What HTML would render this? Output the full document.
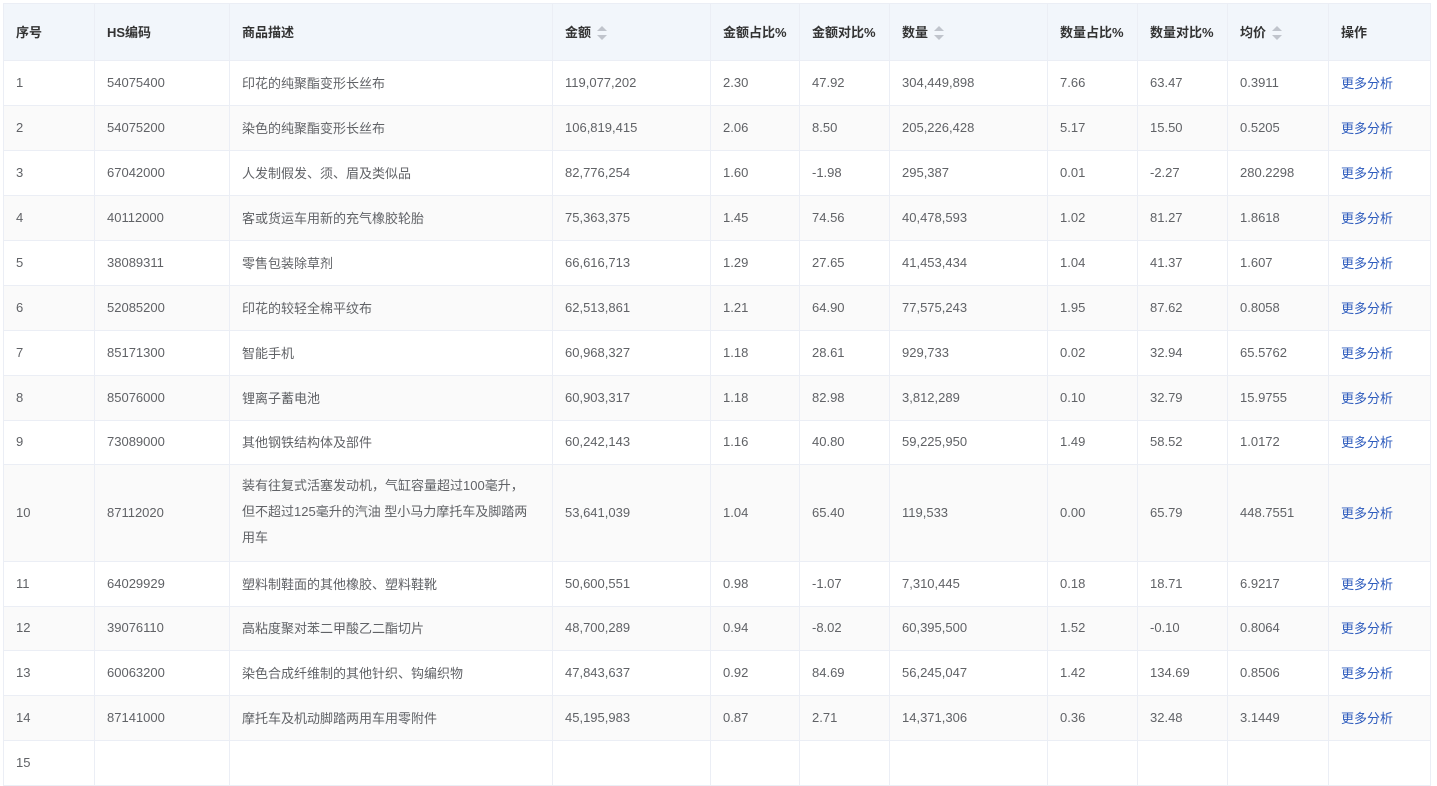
<!DOCTYPE html>
<html><head><meta charset="utf-8"><style>
body{margin:0;background:#fff;font-family:"Liberation Sans","Noto Sans CJK SC",sans-serif;}
table{position:absolute;left:3px;top:3px;border-collapse:collapse;table-layout:fixed;width:1427px;font-size:13px;color:#606266;}
td,th{border:1px solid #ebeef5;padding:0 0 0 12px;text-align:left;height:44px;box-sizing:border-box;}
th{height:57px;background:#f2f6fb;color:#333;font-weight:bold;padding-bottom:2px;}
td{padding-bottom:2px;}
tbody tr:nth-child(even) td{background:#fafafa;}
td.l{color:#2d5bbd;}
.s{display:inline-block;vertical-align:middle;margin-left:6px;width:10px;height:14px;position:relative;}
.s:before,.s:after{content:"";position:absolute;left:0;border-left:5px solid transparent;border-right:5px solid transparent;}
.s:before{top:0;border-bottom:5px solid #c0c4cc;}
.s:after{bottom:0;border-top:5px solid #c0c4cc;}
td.t{line-height:26px;padding-right:24px;}
</style></head><body>
<table>
<colgroup><col style="width:91px"><col style="width:135px"><col style="width:323px"><col style="width:158px"><col style="width:89px"><col style="width:90px"><col style="width:158px"><col style="width:90px"><col style="width:90px"><col style="width:101px"><col style="width:102px"></colgroup>
<thead><tr><th>序号</th><th>HS编码</th><th>商品描述</th><th>金额<span class="s"></span></th><th>金额占比%</th><th>金额对比%</th><th>数量<span class="s"></span></th><th>数量占比%</th><th>数量对比%</th><th>均价<span class="s"></span></th><th>操作</th></tr></thead>
<tbody>
<tr style="height:45px"><td>1</td><td>54075400</td><td>印花的纯聚酯变形长丝布</td><td>119,077,202</td><td>2.30</td><td>47.92</td><td>304,449,898</td><td>7.66</td><td>63.47</td><td>0.3911</td><td class="l">更多分析</td></tr>
<tr style="height:45px"><td>2</td><td>54075200</td><td>染色的纯聚酯变形长丝布</td><td>106,819,415</td><td>2.06</td><td>8.50</td><td>205,226,428</td><td>5.17</td><td>15.50</td><td>0.5205</td><td class="l">更多分析</td></tr>
<tr style="height:45px"><td>3</td><td>67042000</td><td>人发制假发、须、眉及类似品</td><td>82,776,254</td><td>1.60</td><td>-1.98</td><td>295,387</td><td>0.01</td><td>-2.27</td><td>280.2298</td><td class="l">更多分析</td></tr>
<tr style="height:45px"><td>4</td><td>40112000</td><td>客或货运车用新的充气橡胶轮胎</td><td>75,363,375</td><td>1.45</td><td>74.56</td><td>40,478,593</td><td>1.02</td><td>81.27</td><td>1.8618</td><td class="l">更多分析</td></tr>
<tr style="height:45px"><td>5</td><td>38089311</td><td>零售包装除草剂</td><td>66,616,713</td><td>1.29</td><td>27.65</td><td>41,453,434</td><td>1.04</td><td>41.37</td><td>1.607</td><td class="l">更多分析</td></tr>
<tr style="height:45px"><td>6</td><td>52085200</td><td>印花的较轻全棉平纹布</td><td>62,513,861</td><td>1.21</td><td>64.90</td><td>77,575,243</td><td>1.95</td><td>87.62</td><td>0.8058</td><td class="l">更多分析</td></tr>
<tr style="height:45px"><td>7</td><td>85171300</td><td>智能手机</td><td>60,968,327</td><td>1.18</td><td>28.61</td><td>929,733</td><td>0.02</td><td>32.94</td><td>65.5762</td><td class="l">更多分析</td></tr>
<tr style="height:45px"><td>8</td><td>85076000</td><td>锂离子蓄电池</td><td>60,903,317</td><td>1.18</td><td>82.98</td><td>3,812,289</td><td>0.10</td><td>32.79</td><td>15.9755</td><td class="l">更多分析</td></tr>
<tr style="height:44px"><td>9</td><td>73089000</td><td>其他钢铁结构体及部件</td><td>60,242,143</td><td>1.16</td><td>40.80</td><td>59,225,950</td><td>1.49</td><td>58.52</td><td>1.0172</td><td class="l">更多分析</td></tr>
<tr style="height:97px"><td>10</td><td>87112020</td><td class="t">装有往复式活塞发动机，气缸容量超过100毫升，<br>但不超过125毫升的汽油 型小马力摩托车及脚踏两<br>用车</td><td>53,641,039</td><td>1.04</td><td>65.40</td><td>119,533</td><td>0.00</td><td>65.79</td><td>448.7551</td><td class="l">更多分析</td></tr>
<tr style="height:45px"><td>11</td><td>64029929</td><td>塑料制鞋面的其他橡胶、塑料鞋靴</td><td>50,600,551</td><td>0.98</td><td>-1.07</td><td>7,310,445</td><td>0.18</td><td>18.71</td><td>6.9217</td><td class="l">更多分析</td></tr>
<tr style="height:44px"><td>12</td><td>39076110</td><td>高粘度聚对苯二甲酸乙二酯切片</td><td>48,700,289</td><td>0.94</td><td>-8.02</td><td>60,395,500</td><td>1.52</td><td>-0.10</td><td>0.8064</td><td class="l">更多分析</td></tr>
<tr style="height:45px"><td>13</td><td>60063200</td><td>染色合成纤维制的其他针织、钩编织物</td><td>47,843,637</td><td>0.92</td><td>84.69</td><td>56,245,047</td><td>1.42</td><td>134.69</td><td>0.8506</td><td class="l">更多分析</td></tr>
<tr style="height:45px"><td>14</td><td>87141000</td><td>摩托车及机动脚踏两用车用零附件</td><td>45,195,983</td><td>0.87</td><td>2.71</td><td>14,371,306</td><td>0.36</td><td>32.48</td><td>3.1449</td><td class="l">更多分析</td></tr>
<tr style="height:45px"><td>15</td><td></td><td></td><td></td><td></td><td></td><td></td><td></td><td></td><td></td><td></td></tr>
</tbody></table>
</body></html>
